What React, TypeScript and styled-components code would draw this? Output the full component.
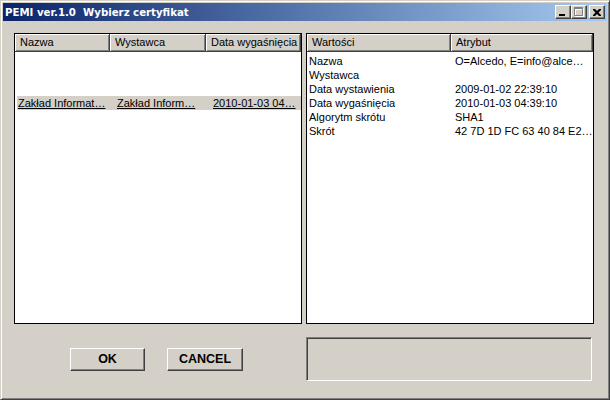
import React from 'react';
import styled, { createGlobalStyle } from 'styled-components';

const GlobalStyle = createGlobalStyle`
  html, body {
    margin: 0;
    padding: 0;
    background: #d4d0c8;
  }
`;

/**
 * Classic window frame.
 */
const Window = styled.div`
  box-sizing: border-box;
  width: 610px;
  height: 400px;
  display: flex;
  flex-direction: column;
  background: #d4d0c8;
  border: 1px solid;
  border-color: #d4d0c8 #404040 #404040 #d4d0c8;
  box-shadow: inset 1px 1px #fff, inset -1px -1px #808080;
  padding: 2px;
  font-family: 'Liberation Sans', Arial, sans-serif;
  font-size: 11px;
  color: #000;
`;

const TitleBar = styled.div`
  height: 18px;
  display: flex;
  align-items: center;
  padding: 0 2px 0 2px;
  background: linear-gradient(to right, #0a246a, #a6caf0);
`;

const Title = styled.div`
  flex: 1;
  color: #fff;
  font-family: 'DejaVu Sans', Verdana, sans-serif;
  font-weight: bold;
  font-size: 10.2px;
  white-space: pre;
`;

const CaptionButton = styled.button<{ $gapLeft?: boolean }>`
  box-sizing: border-box;
  width: 16px;
  height: 14px;
  padding: 0;
  margin-left: ${(p) => (p.$gapLeft ? '2px' : '0')};
  display: flex;
  align-items: center;
  justify-content: center;
  background: #d4d0c8;
  border: 1px solid;
  border-color: #fff #404040 #404040 #fff;
  box-shadow: inset -1px -1px #808080;
`;

const Content = styled.div`
  flex: 1;
  display: grid;
  grid-template-columns: 288px 288px;
  grid-template-rows: 291px 44px;
  column-gap: 4px;
  row-gap: 13px;
  padding: 12px 0 0 11px;
`;

const ListBox = styled.div`
  box-sizing: border-box;
  background: #fff;
  border: 1px solid #000;
  overflow: hidden;
`;

const HeaderRow = styled.div`
  display: flex;
  height: 18px;
  background: #d4d0c8;
`;

const HeaderCell = styled.div<{ $width: number; $grow?: boolean }>`
  box-sizing: border-box;
  width: ${(p) => p.$width}px;
  flex: ${(p) => (p.$grow ? '1' : 'none')};
  height: 18px;
  line-height: 16px;
  padding-left: 5px;
  border-right: 1px solid #404040;
  border-bottom: 1px solid #404040;
  box-shadow: inset 1px 1px #fff, inset -1px -1px #808080;
  white-space: nowrap;
  overflow: hidden;
`;

const Rows = styled.div`
  padding-top: 2px;
`;

const Row = styled.div<{ $selected?: boolean }>`
  display: flex;
  height: 14px;
  line-height: 14px;
  margin-left: ${(p) => (p.$selected ? '2px' : '0')};
  background: ${(p) => (p.$selected ? '#d4d0c8' : 'transparent')};
  text-decoration: ${(p) => (p.$selected ? 'underline' : 'none')};
`;

const Cell = styled.div<{ $width: number; $pad: number }>`
  box-sizing: border-box;
  width: ${(p) => p.$width}px;
  padding-left: ${(p) => p.$pad}px;
  white-space: nowrap;
  overflow: hidden;
`;

const BottomLeft = styled.div`
  display: flex;
  align-items: center;
  gap: 22px;
  padding-left: 56px;
`;

const PushButton = styled.button<{ $width: number }>`
  box-sizing: border-box;
  width: ${(p) => p.$width}px;
  height: 23px;
  padding: 0;
  background: #d4d0c8;
  border: 1px solid;
  border-color: #fff #404040 #404040 #fff;
  box-shadow: inset -1px -1px #808080;
  font-family: 'Liberation Sans', Arial, sans-serif;
  font-weight: bold;
  font-size: 12.5px;
  color: #000;
`;

const StatusBox = styled.div`
  box-sizing: border-box;
  width: 286px;
  height: 44px;
  border: 1px solid;
  border-color: #808080 #fff #fff #808080;
  box-shadow: inset 1px 1px #404040;
`;

const leftColumns = [
  { title: 'Nazwa', width: 95 },
  { title: 'Wystawca', width: 96 },
  { title: 'Data wygaśnięcia', width: 95 },
];

const certificate = ['Zakład Informat…', 'Zakład Inform…', '2010-01-03 04…'];

const details = [
  ['Nazwa', 'O=Alcedo, E=info@alce…'],
  ['Wystawca', ''],
  ['Data wystawienia', '2009-01-02 22:39:10'],
  ['Data wygaśnięcia', '2010-01-03 04:39:10'],
  ['Algorytm skrótu', 'SHA1'],
  ['Skrót', '42 7D 1D FC 63 40 84 E2…'],
];

const App: React.FC = () => {
  return (
    <>
      <GlobalStyle />
      <Window>
        <TitleBar>
          <Title>{'PEMI ver.1.0  Wybierz certyfikat'}</Title>
          <CaptionButton aria-label="Minimize">
            <svg width="8" height="7" viewBox="0 0 8 7">
              <rect x="0" y="5" width="6" height="2" fill="#000" />
            </svg>
          </CaptionButton>
          <CaptionButton aria-label="Maximize">
            <svg width="10" height="10" viewBox="0 0 10 10">
              <path d="M1.5 1.5h8v8h-8z M1 2.5h9" stroke="#fff" fill="none" />
              <path d="M0.5 0.5h8v8h-8z M0 1.5h9" stroke="#808080" fill="none" />
            </svg>
          </CaptionButton>
          <CaptionButton aria-label="Close" $gapLeft>
            <svg width="8" height="7" viewBox="0 0 8 7">
              <path
                d="M0 0h2l2 2 2-2h2v1l-2.5 2.5 2.5 2.5v1h-2l-2-2-2 2h-2v-1l2.5-2.5-2.5-2.5z"
                fill="#000"
              />
            </svg>
          </CaptionButton>
        </TitleBar>
        <Content>
          <ListBox>
            <HeaderRow>
              {leftColumns.map((c) => (
                <HeaderCell key={c.title} $width={c.width}>
                  {c.title}
                </HeaderCell>
              ))}
            </HeaderRow>
            <Rows>
              <Row />
              <Row />
              <Row />
              <Row $selected>
                <Cell $width={93} $pad={1}>
                  <span>{certificate[0]}</span>
                </Cell>
                <Cell $width={96} $pad={7}>
                  <span>{certificate[1]}</span>
                </Cell>
                <Cell $width={95} $pad={7}>
                  <span>{certificate[2]}</span>
                </Cell>
              </Row>
            </Rows>
          </ListBox>
          <ListBox>
            <HeaderRow>
              <HeaderCell $width={144}>Wartości</HeaderCell>
              <HeaderCell $width={142} $grow>
                Atrybut
              </HeaderCell>
            </HeaderRow>
            <Rows>
              {details.map(([name, value]) => (
                <Row key={name}>
                  <Cell $width={144} $pad={2}>
                    {name}
                  </Cell>
                  <Cell $width={142} $pad={4}>
                    {value}
                  </Cell>
                </Row>
              ))}
            </Rows>
          </ListBox>
          <BottomLeft>
            <PushButton $width={75}>OK</PushButton>
            <PushButton $width={76}>CANCEL</PushButton>
          </BottomLeft>
          <StatusBox />
        </Content>
      </Window>
    </>
  );
};

export default App;
